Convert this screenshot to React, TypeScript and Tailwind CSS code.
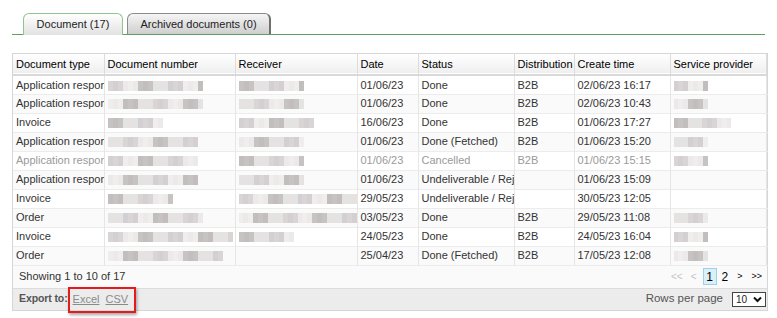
import React from 'react';

type Row = {
  type: string;
  num: number;
  rec: number;
  date: string;
  status: string;
  dist: string;
  created: string;
  sp: number;
  muted?: boolean;
};

const rows: Row[] = [
  { type: 'Application respon', num: 95, rec: 65, date: '01/06/23', status: 'Done', dist: 'B2B', created: '02/06/23 16:17', sp: 34 },
  { type: 'Application respon', num: 95, rec: 65, date: '01/06/23', status: 'Done', dist: 'B2B', created: '02/06/23 10:43', sp: 34 },
  { type: 'Invoice', num: 55, rec: 75, date: '16/06/23', status: 'Done', dist: 'B2B', created: '01/06/23 17:27', sp: 58 },
  { type: 'Application respon', num: 90, rec: 65, date: '01/06/23', status: 'Done (Fetched)', dist: 'B2B', created: '01/06/23 15:20', sp: 34 },
  { type: 'Application respon', num: 90, rec: 65, date: '01/06/23', status: 'Cancelled', dist: 'B2B', created: '01/06/23 15:15', sp: 34, muted: true },
  { type: 'Application respon', num: 90, rec: 65, date: '01/06/23', status: 'Undeliverable / Rej', dist: '', created: '01/06/23 15:09', sp: 0 },
  { type: 'Invoice', num: 65, rec: 118, date: '29/05/23', status: 'Undeliverable / Rej', dist: '', created: '30/05/23 12:05', sp: 0 },
  { type: 'Order', num: 95, rec: 118, date: '03/05/23', status: 'Done', dist: 'B2B', created: '29/05/23 11:08', sp: 34 },
  { type: 'Invoice', num: 125, rec: 55, date: '24/05/23', status: 'Done', dist: 'B2B', created: '24/05/23 16:04', sp: 34 },
  { type: 'Order', num: 115, rec: 0, date: '25/04/23', status: 'Done (Fetched)', dist: 'B2B', created: '17/05/23 12:08', sp: 34 },
];

const shades = ['#dad5d5', '#ebe9e9', '#c8c3c3', '#e3e3e3', '#d3cfd3', '#f0eeec', '#c2bebe', '#e7e2e2'];

// pixelated placeholder for the redacted values
function Blur({ width, seed }: { width: number; seed: number }) {
  if (!width) return null;
  const count = Math.max(2, Math.round(width / 5));
  return (
    <span className="inline-flex h-[10px] align-middle blur-[0.5px]" style={{ width }}>
      {Array.from({ length: count }).map((_, i) => (
        <span key={i} className="flex-1 h-full" style={{ background: shades[(i * 3 + seed * 5 + (i % 3)) % shades.length] }} />
      ))}
    </span>
  );
}

const headers = ['Document type', 'Document number', 'Receiver', 'Date', 'Status', 'Distribution', 'Create time', 'Service provider'];

export default function App() {
  return (
    <div className="w-[777px] h-[318px] bg-white pt-[13px] px-3 font-['Liberation_Sans',Arial,sans-serif] text-[11px] text-[#333] relative">
      {/* tabs */}
      <div className="flex items-end gap-[4px] pl-[11px] h-[22px] border-b border-[#5f9f5f]">
        <div className="w-[100px] h-[22px] -mb-px rounded-t-[6px] border border-b-0 border-[#8fc58f] bg-gradient-to-b from-white to-[#e2e2e2] flex items-center justify-center text-[#222]">
          Document (17)
        </div>
        <div className="w-[144px] h-[21px] rounded-t-[6px] border border-b-0 border-[#8c8c8c] border-r-2 border-r-[#6f6f6f] bg-gradient-to-b from-[#f5f5f5] to-[#cfcfcf] flex items-center justify-center text-[#222]">
          Archived documents (0)
        </div>
      </div>

      {/* grid */}
      <div className="mt-[18px] w-[756px] border border-[#d6d6d6]">
        <table className="table-fixed border-collapse w-full">
          <colgroup>
            <col className="w-[91px]" />
            <col className="w-[131px]" />
            <col className="w-[122px]" />
            <col className="w-[61px]" />
            <col className="w-[96px]" />
            <col className="w-[60px]" />
            <col className="w-[96px]" />
            <col className="w-[96px]" />
            <col className="w-[1px]" />
          </colgroup>
          <thead>
            <tr className="h-[21px] bg-gradient-to-b from-white to-[#efefef] border-b-2 border-[#d9d9d9]">
              {headers.map((h) => (
                <th key={h} className="font-normal text-left text-black px-[3px] border-r border-[#dcdcdc] whitespace-nowrap overflow-hidden">
                  {h}
                </th>
              ))}
              <th className="bg-[#f3f3f3]" />
            </tr>
          </thead>
          <tbody>
            {rows.map((r, i) => (
              <tr key={i} className={`h-[19px] border-b border-[#ececec] ${r.muted ? 'text-[#9a9a9a]' : 'text-[#333]'} ${i % 2 ? 'bg-[#fafafa]' : 'bg-white'}`}>
                <td className="px-[3px] border-r border-[#e6e6e6] whitespace-nowrap overflow-hidden">{r.type}</td>
                <td className="px-[3px] border-r border-[#e6e6e6] whitespace-nowrap overflow-hidden"><Blur width={r.num} seed={i} /></td>
                <td className="px-[3px] border-r border-[#e6e6e6] whitespace-nowrap overflow-hidden"><Blur width={r.rec} seed={i + 2} /></td>
                <td className="px-[3px] border-r border-[#e6e6e6] whitespace-nowrap overflow-hidden">{r.date}</td>
                <td className="px-[3px] border-r border-[#e6e6e6] whitespace-nowrap overflow-hidden">{r.status}</td>
                <td className="px-[3px] border-r border-[#e6e6e6] whitespace-nowrap overflow-hidden">{r.dist}</td>
                <td className="px-[3px] border-r border-[#e6e6e6] whitespace-nowrap overflow-hidden">{r.created}</td>
                <td className="px-[3px] border-r border-[#e6e6e6] whitespace-nowrap overflow-hidden"><Blur width={r.sp} seed={i + 4} /></td>
                <td className="bg-[#f6f6f6]" />
              </tr>
            ))}
          </tbody>
        </table>

        {/* paging */}
        <div className="h-[22px] bg-[#fafafa] flex items-center justify-between pl-[6px] pr-[5px]">
          <span className="text-[#333]">Showing 1 to 10 of 17</span>
          <div className="flex items-center text-[12px]">
            <span className="text-[#c4c4c4] text-[10px]">&lt;&lt;</span>
            <span className="text-[#c4c4c4] text-[10px] ml-[8px]">&lt;</span>
            <span className="ml-[6px] w-[14px] h-[17px] border border-[#9fd0ea] bg-[#d9effa] flex items-center justify-center text-black">1</span>
            <span className="ml-[5px] text-black">2</span>
            <span className="ml-[9px] text-black text-[9px]">&gt;</span>
            <span className="ml-[9px] text-black text-[9px]">&gt;&gt;</span>
          </div>
        </div>

        {/* export bar */}
        <div className="h-[22px] bg-[#ececec] border-t border-[#dcdcdc] flex items-center justify-between pl-[6px] pr-[1px] text-[#555]">
          <div className="flex items-center">
            <span className="font-bold text-[10.5px] tracking-[-0.1px]">Export to:</span>
            <span className="ml-[5px] underline text-[#8a8a8a]">Excel</span>
            <span className="ml-[6px] underline text-[#8a8a8a]">CSV</span>
          </div>
          <div className="flex items-center gap-[9px]">
            <span className="text-[11.5px]">Rows per page</span>
            <div className="w-[34px] h-[15px] border border-[#444] bg-white flex items-center justify-between px-[3px] text-[#222] text-[10px]">
              <span>10</span>
              <svg width="9" height="7" viewBox="0 0 9 7">
                <path d="M1 1.5 L4.5 5 L8 1.5" fill="none" stroke="#111" strokeWidth="2" />
              </svg>
            </div>
          </div>
        </div>
      </div>

      {/* highlight annotation */}
      <div className="absolute left-[68px] top-[287px] w-[68px] h-[26px] border-2 border-[#e31b1b] shadow-[1px_2px_3px_rgba(0,0,0,0.35)]" />
    </div>
  );
}
